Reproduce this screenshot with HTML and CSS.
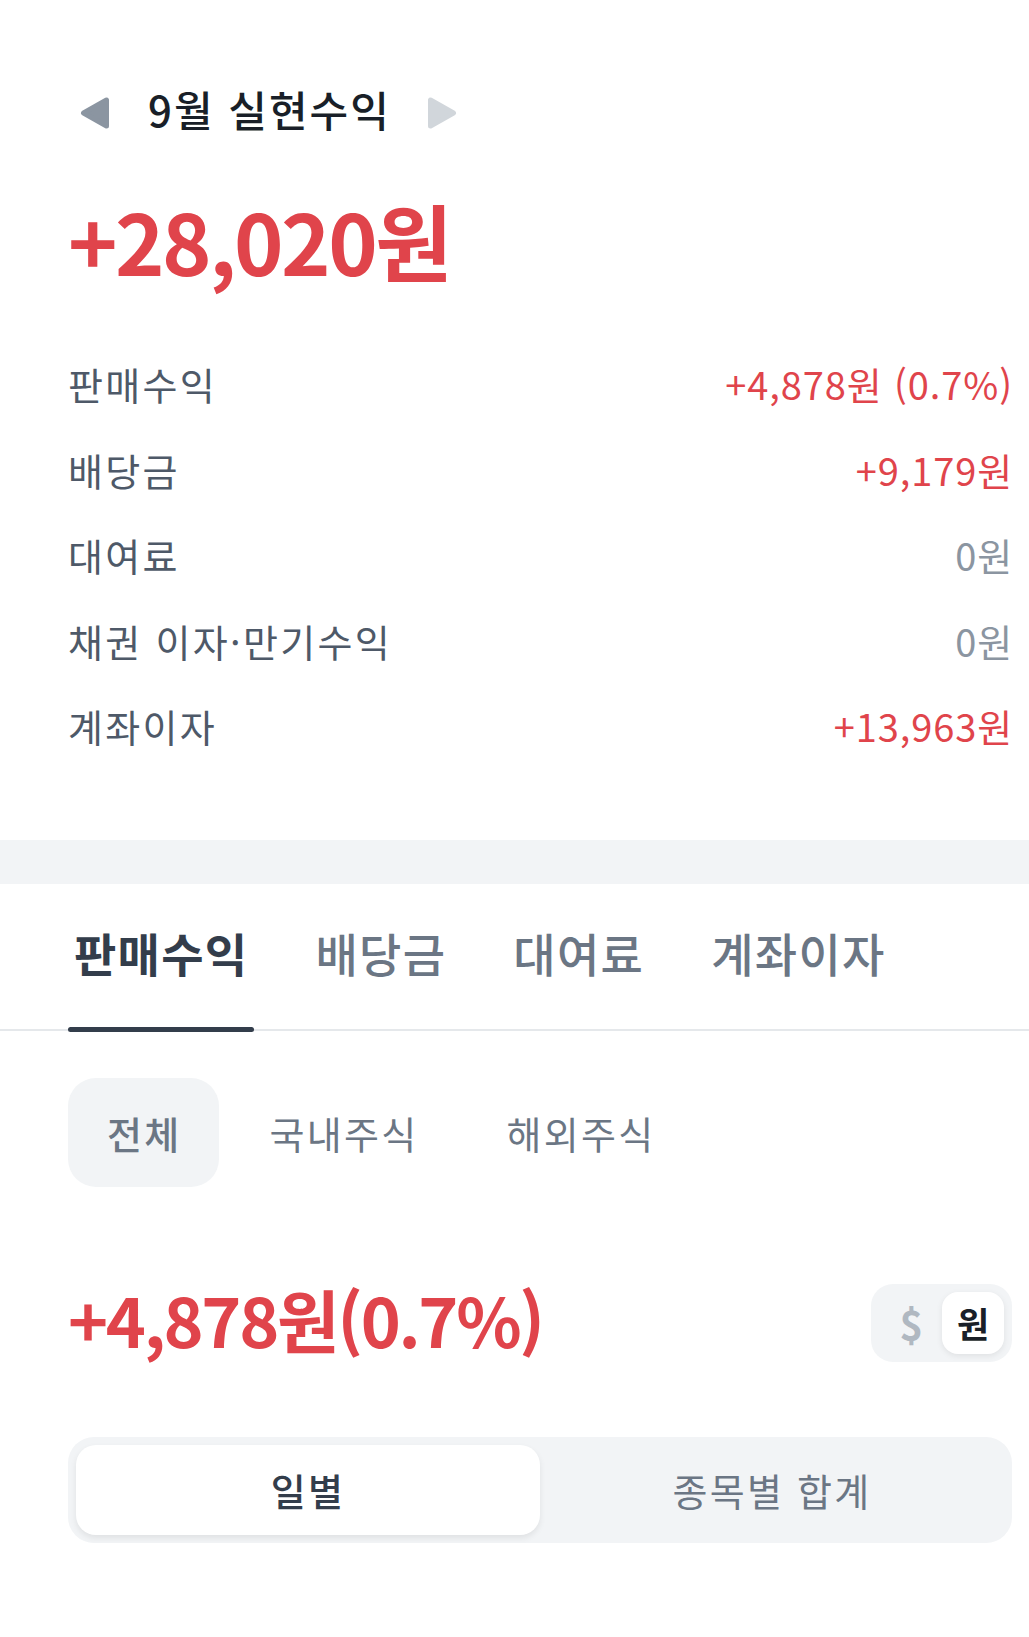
FILE: index.html
```html
<!DOCTYPE html>
<html lang="ko">
<head>
    <meta charset="UTF-8">
    <meta name="viewport" content="width=device-width, initial-scale=1.0">
    <title>실현수익</title>
    <link rel="stylesheet" href="styles.css">
</head>
<body>
    <div class="summary">
        <div class="month-nav">
            <button class="nav-btn" aria-label="이전 달">
                <svg width="30" height="32" viewBox="0 0 30 32"><polygon points="26.5,3 26.5,29 3.5,16" fill="#8b95a1" stroke="#8b95a1" stroke-width="5" stroke-linejoin="round"/></svg>
            </button>
            <h1 class="month-title">9월 실현수익</h1>
            <button class="nav-btn" aria-label="다음 달">
                <svg width="30" height="32" viewBox="0 0 30 32"><polygon points="3.5,3 3.5,29 26.5,16" fill="#d1d6db" stroke="#d1d6db" stroke-width="5" stroke-linejoin="round"/></svg>
            </button>
        </div>

        <div class="total plus">+28,020원</div>

        <ul class="breakdown">
            <li><span class="label">판매수익</span><span class="value plus">+4,878원 (0.7%)</span></li>
            <li><span class="label">배당금</span><span class="value plus">+9,179원</span></li>
            <li><span class="label">대여료</span><span class="value zero">0원</span></li>
            <li><span class="label">채권 이자·만기수익</span><span class="value zero">0원</span></li>
            <li><span class="label">계좌이자</span><span class="value plus">+13,963원</span></li>
        </ul>
    </div>

    <div class="band"></div>

    <div class="tabs">
        <div class="tab active">판매수익</div>
        <div class="tab">배당금</div>
        <div class="tab">대여료</div>
        <div class="tab">계좌이자</div>
    </div>

    <div class="detail">
        <div class="chips">
            <div class="chip selected">전체</div>
            <div class="chip">국내주식</div>
            <div class="chip">해외주식</div>
        </div>

        <div class="amount-row">
            <div class="amount plus">+4,878원(0.7%)</div>
            <div class="currency">
                <span class="cur">$</span>
                <span class="cur on">원</span>
            </div>
        </div>

        <div class="segment">
            <div class="seg on">일별</div>
            <div class="seg">종목별 합계</div>
        </div>
    </div>
</body>
</html>
```

FILE: styles.css
```css
body {
    margin: 0;
    background: #fff;
    font-family: "Noto Sans CJK KR", "Noto Sans", sans-serif;
    color: #191f28;
}
.summary {
    padding: 81px 17px 71px 68px;
}
.month-nav {
    display: flex;
    align-items: center;
    height: 56px;
}
.nav-btn {
    background: none;
    border: none;
    padding: 8px 12px 0;
    display: flex;
    align-items: center;
}
.month-title {
    margin: 0 24px 0 26px;
    font-size: 42px;
    font-weight: 500;
    line-height: 56px;
    letter-spacing: 2px;
}
.plus {
    color: #e0444b;
}
.total {
    margin-top: 53px;
    font-size: 84px;
    font-weight: 700;
    line-height: 100px;
    letter-spacing: -2.5px;
}
.breakdown {
    list-style: none;
    margin: 51px 0 0;
    padding: 0;
}
.breakdown li {
    display: flex;
    justify-content: space-between;
    align-items: center;
    height: 85.5px;
    font-size: 38px;
}
.label {
    color: #4e5968;
    letter-spacing: 2.3px;
}
.value {
    letter-spacing: 0.9px;
    margin-right: -1px;
}
.zero {
    color: #8b95a1;
}
.band {
    height: 44px;
    background: #f2f4f6;
}
.tabs {
    display: flex;
    gap: 55px;
    padding: 38px 0 0 68px;
    border-bottom: 2px solid #e5e8eb;
}
.tab {
    position: relative;
    padding: 0 6px 47px;
    font-size: 46px;
    font-weight: 500;
    line-height: 60px;
    letter-spacing: 1.3px;
    color: #6b7684;
}
.tab.active {
    font-weight: 700;
    color: #333d4b;
}
.tab.active::after {
    content: "";
    position: absolute;
    left: 0;
    right: 0;
    bottom: -3px;
    height: 5px;
    border-radius: 3px;
    background: #333d4b;
}
.detail {
    padding: 47px 17px 0 68px;
}
.chips {
    display: flex;
    gap: 12px;
}
.chip {
    height: 109px;
    padding: 0 37px 0 39px;
    display: flex;
    align-items: center;
    border-radius: 28px;
    font-size: 38px;
    letter-spacing: 2.3px;
    color: #6b7684;
}
.chip.selected {
    background: #f2f4f6;
    font-weight: 500;
}
.amount-row {
    display: flex;
    justify-content: space-between;
    align-items: center;
    margin-top: 97px;
    height: 78px;
}
.amount {
    font-size: 68px;
    font-weight: 700;
    line-height: 78px;
    letter-spacing: -2.3px;
    padding-bottom: 8px;
}
.currency {
    display: flex;
    align-items: center;
    height: 78px;
    padding: 0 8px 0 28px;
    gap: 19px;
    background: #f2f4f6;
    border-radius: 22px;
    box-sizing: border-box;
}
.cur {
    font-size: 40px;
    font-weight: 700;
    color: #b0b8c1;
}
.cur.on {
    width: 62px;
    height: 62px;
    display: flex;
    align-items: center;
    justify-content: center;
    background: #fff;
    border-radius: 16px;
    color: #191f28;
    font-size: 35px;
    box-shadow: 0 2px 6px rgba(0, 0, 0, 0.08);
}
.segment {
    display: flex;
    margin-top: 75px;
    padding: 8px;
    background: #f2f4f6;
    border-radius: 26px;
}
.seg {
    flex: 1;
    height: 90px;
    display: flex;
    align-items: center;
    justify-content: center;
    border-radius: 20px;
    font-size: 38px;
    letter-spacing: 2.3px;
    color: #6b7684;
}
.seg.on {
    background: #fff;
    color: #333d4b;
    font-weight: 500;
    box-shadow: 0 3px 6px rgba(0, 0, 0, 0.08);
}
```
